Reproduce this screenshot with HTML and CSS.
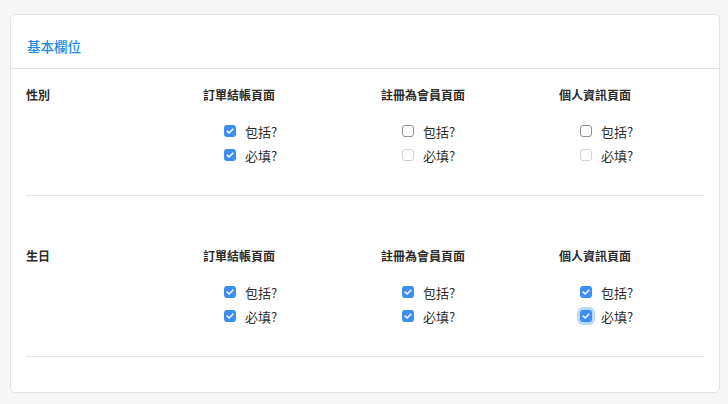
FILE: index.html
```html
<!DOCTYPE html>
<html lang="zh-Hant">
<head>
<meta charset="utf-8">
<title>基本欄位</title>
<link rel="stylesheet" href="styles.css">
</head>
<body>
<section class="card">
  <header class="card-head">基本欄位</header>
  <div class="card-body">
    <div class="field-row first">
      <div class="field-name">性別</div>
      <div class="page-col">
        <div class="page-title">訂單結帳頁面</div>
        <ul class="opts">
          <li><span class="box on"><svg viewBox="0 0 12 12"><path d="M3.2 6.2 5.1 8 8.8 4.2"/></svg></span>包括?</li>
          <li><span class="box on"><svg viewBox="0 0 12 12"><path d="M3.2 6.2 5.1 8 8.8 4.2"/></svg></span>必填?</li>
        </ul>
      </div>
      <div class="page-col">
        <div class="page-title">註冊為會員頁面</div>
        <ul class="opts">
          <li><span class="box"></span>包括?</li>
          <li><span class="box off"></span>必填?</li>
        </ul>
      </div>
      <div class="page-col">
        <div class="page-title">個人資訊頁面</div>
        <ul class="opts">
          <li><span class="box"></span>包括?</li>
          <li><span class="box off"></span>必填?</li>
        </ul>
      </div>
    </div>
    <div class="field-row">
      <div class="field-name">生日</div>
      <div class="page-col">
        <div class="page-title">訂單結帳頁面</div>
        <ul class="opts">
          <li><span class="box on"><svg viewBox="0 0 12 12"><path d="M3.2 6.2 5.1 8 8.8 4.2"/></svg></span>包括?</li>
          <li><span class="box on"><svg viewBox="0 0 12 12"><path d="M3.2 6.2 5.1 8 8.8 4.2"/></svg></span>必填?</li>
        </ul>
      </div>
      <div class="page-col">
        <div class="page-title">註冊為會員頁面</div>
        <ul class="opts">
          <li><span class="box on"><svg viewBox="0 0 12 12"><path d="M3.2 6.2 5.1 8 8.8 4.2"/></svg></span>包括?</li>
          <li><span class="box on"><svg viewBox="0 0 12 12"><path d="M3.2 6.2 5.1 8 8.8 4.2"/></svg></span>必填?</li>
        </ul>
      </div>
      <div class="page-col">
        <div class="page-title">個人資訊頁面</div>
        <ul class="opts">
          <li><span class="box on"><svg viewBox="0 0 12 12"><path d="M3.2 6.2 5.1 8 8.8 4.2"/></svg></span>包括?</li>
          <li><span class="box on focus"><svg viewBox="0 0 12 12"><path d="M3.2 6.2 5.1 8 8.8 4.2"/></svg></span>必填?</li>
        </ul>
      </div>
    </div>
  </div>
</section>
</body>
</html>
```
FILE: styles.css
```css
html, body {
  margin: 0;
  background: #f7f7f7;
}
body {
  padding: 14px 8px 0 10px;
  font-family: "Noto Sans CJK TC", "Noto Sans", sans-serif;
  font-size: 12px;
  color: #333;
}
.card {
  background: #fff;
  border: 1px solid #e2e2e2;
  border-radius: 5px;
  height: 379px;
  box-sizing: border-box;
}
.card-head {
  height: 54px;
  box-sizing: border-box;
  padding: 21px 16px 0;
  font-size: 13.5px;
  font-weight: 500;
  line-height: 20px;
  color: #1a8be3;
  border-bottom: 1px solid #e4e4e4;
}
.card-body {
  padding: 0 14px 0 15px;
}
.field-row {
  display: grid;
  grid-template-columns: 177px 178px 178px 1fr;
  padding: 51px 0 28px;
  border-bottom: 1px solid #e8e8e8;
}
.field-row.first {
  padding-top: 17px;
}
.field-name,
.page-title {
  font-weight: bold;
  line-height: 18px;
  color: #2b2b2b;
}
.opts {
  list-style: none;
  margin: 15px 0 0;
  padding: 0 0 0 21px;
}
.opts li {
  display: flex;
  align-items: center;
  height: 24px;
  gap: 9px;
  font-size: 13px;
  color: #2b2b2b;
}
.box {
  width: 12px;
  height: 12px;
  box-sizing: border-box;
  border: 1px solid #8f8f8f;
  border-radius: 3px;
  background: #fff;
  display: flex;
}
.box.off {
  border-color: #d4d4d4;
}
.box.on {
  border: none;
  background: #3a8ef6;
}
.box.focus {
  box-shadow: 0 0 0 3px rgba(58, 142, 246, 0.35);
}
.box svg {
  width: 12px;
  height: 12px;
}
.box svg path {
  fill: none;
  stroke: #fff;
  stroke-width: 1.6;
  stroke-linecap: round;
  stroke-linejoin: round;
}
```
